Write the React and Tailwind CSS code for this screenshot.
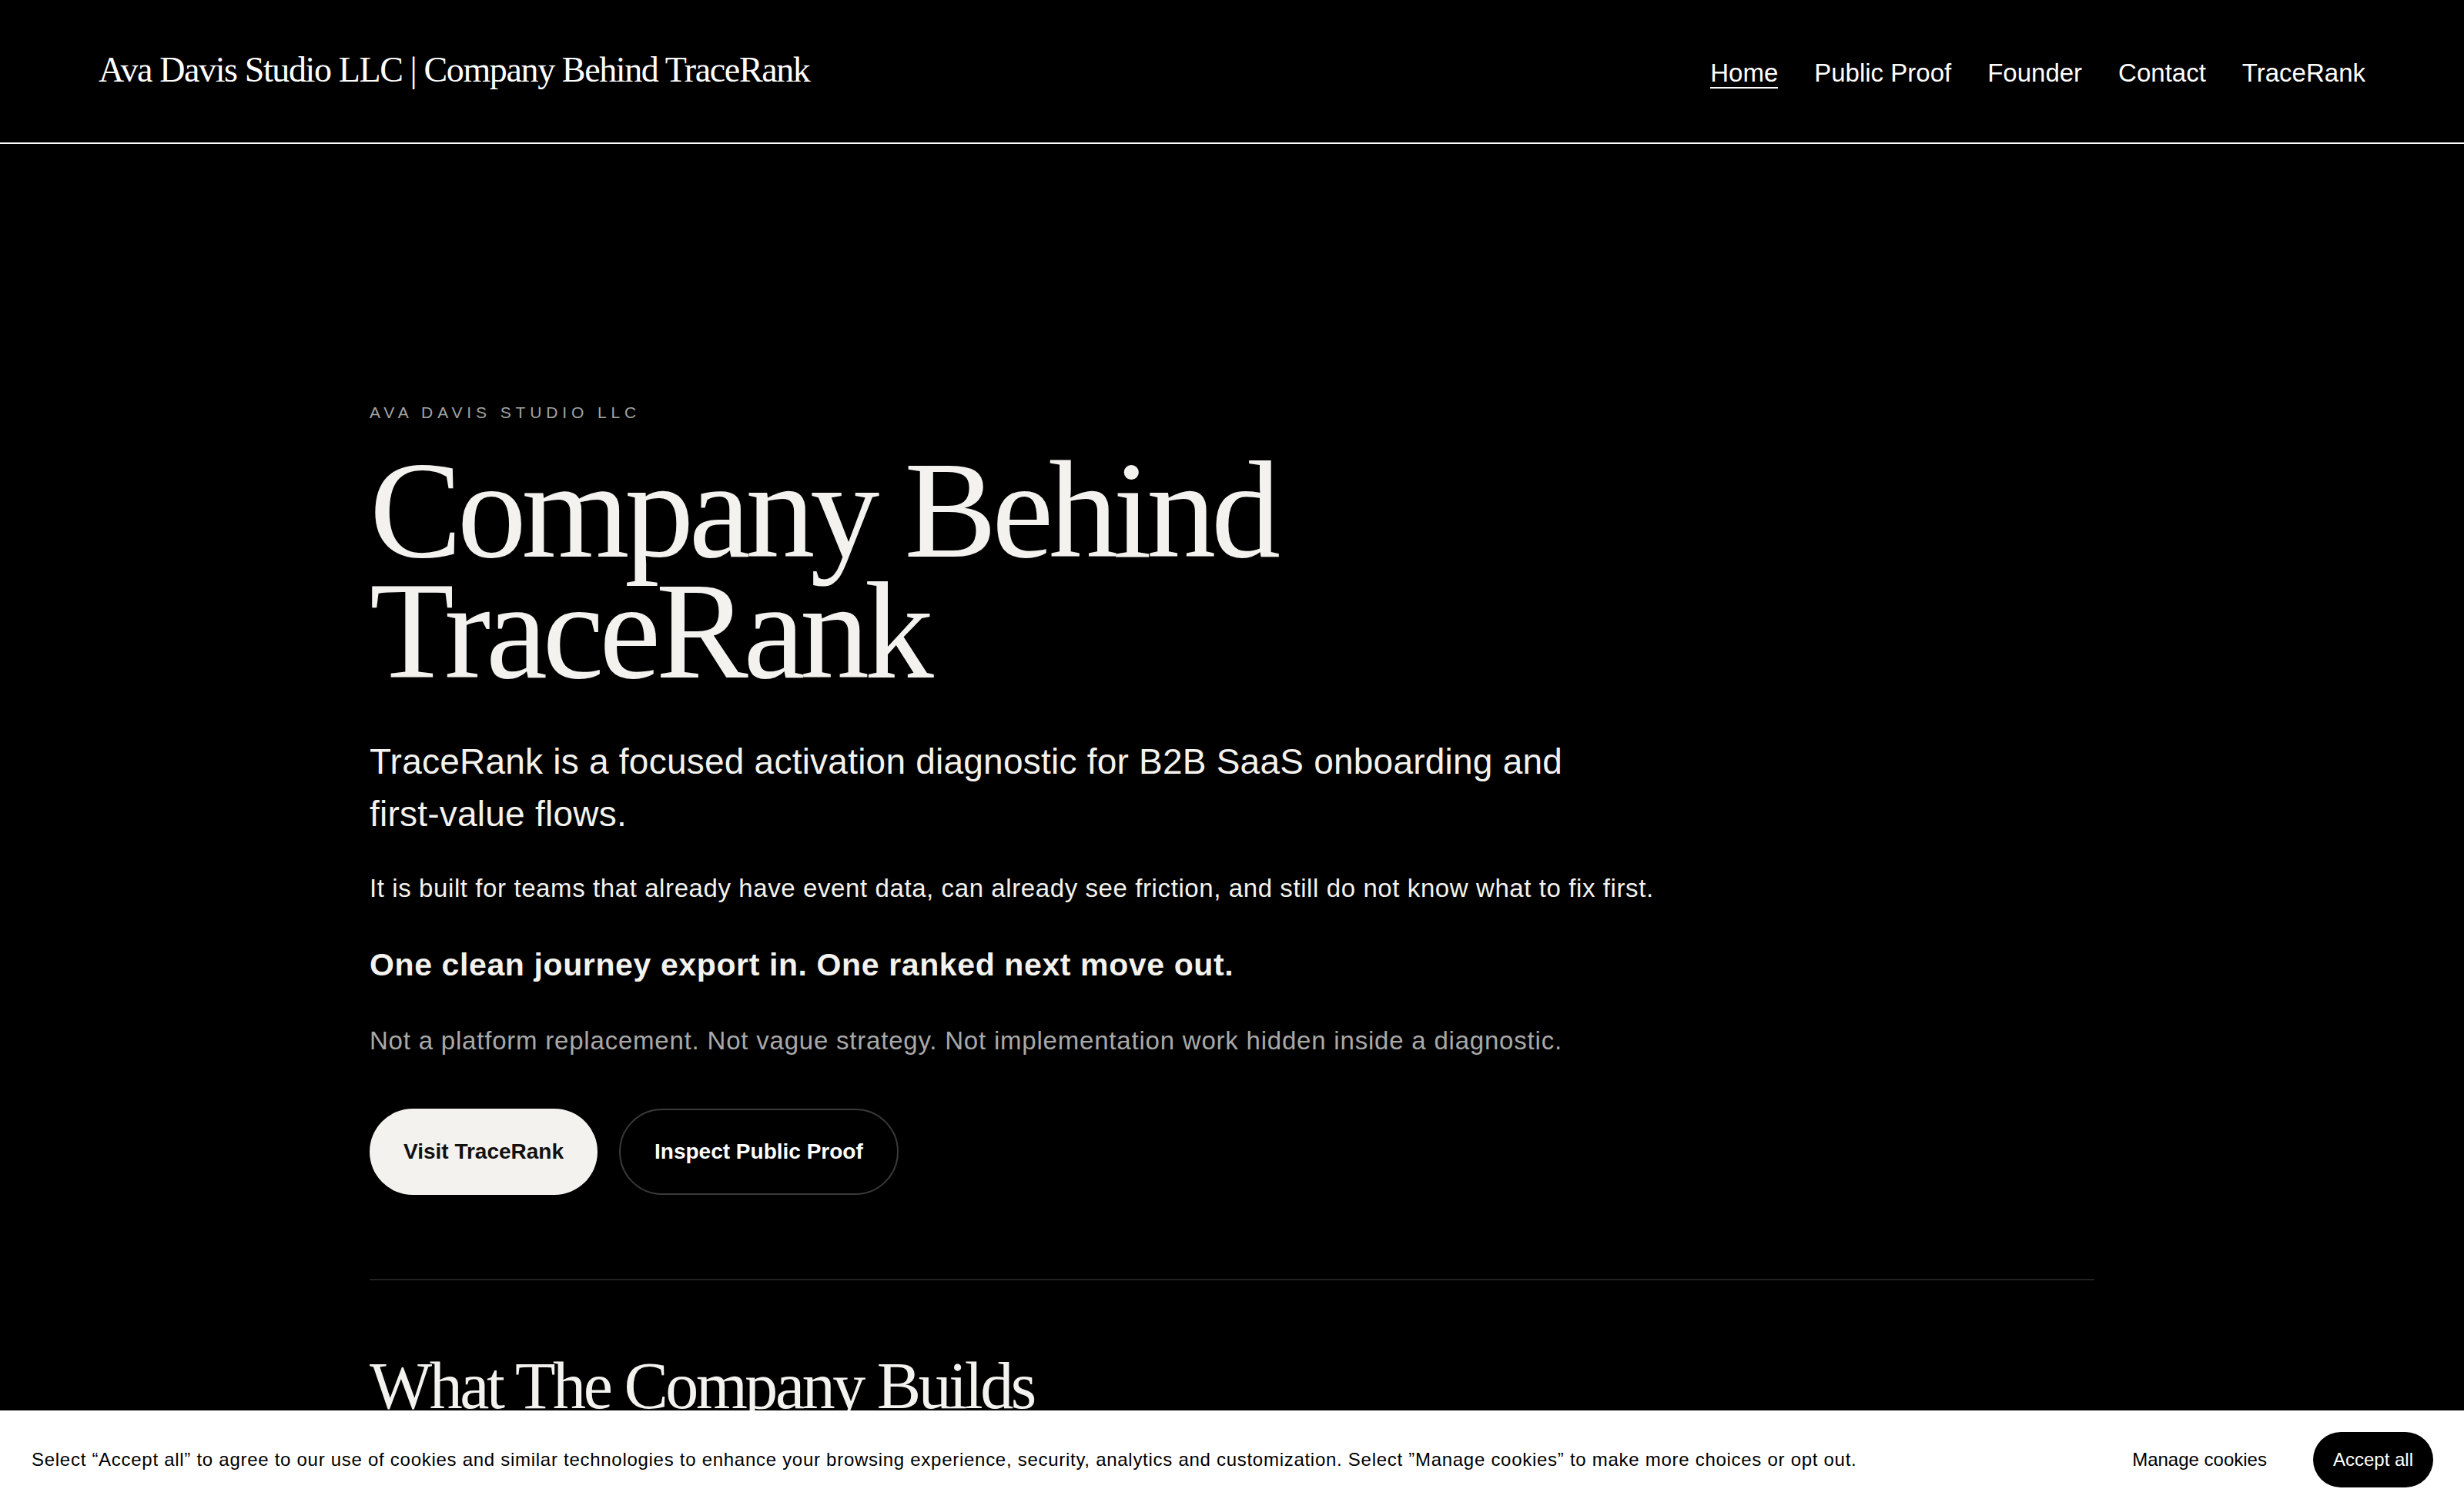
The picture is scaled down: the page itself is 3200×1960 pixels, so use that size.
import React from 'react';

const navLinks = ['Home', 'Public Proof', 'Founder', 'Contact', 'TraceRank'];

const Header = () => (
  <header className="h-[187px] px-[128px] pt-[68px] flex justify-between items-baseline border-b-2 border-white">
    <a className="font-['Liberation_Serif',serif] text-[46px] leading-none tracking-[-0.03em] text-white">
      Ava Davis Studio LLC | Company Behind TraceRank
    </a>
    <nav className="flex items-baseline gap-[47px] text-[33px] leading-none text-white">
      {navLinks.map((link, idx) => (
        <a
          key={link}
          className={idx === 0 ? 'inline-block pb-[2px] border-b-2 border-white' : 'inline-block pb-[2px] border-b-2 border-transparent'}
        >
          {link}
        </a>
      ))}
    </nav>
  </header>
);

const Hero = () => (
  <section className="max-w-[2240px] mx-auto pt-[338px]">
    <p className="text-[21px] leading-none tracking-[0.28em] text-[#a3a3a3]">AVA DAVIS STUDIO LLC</p>

    <h1 className="mt-[38px] max-w-[1400px] font-['Liberation_Serif',serif] text-[180px] leading-[157px] tracking-[-0.035em] text-[#f3f2ee]">
      Company Behind TraceRank
    </h1>

    <p className="mt-[57px] max-w-[1640px] text-[46px] leading-[68px] tracking-[0.005em] text-[#f3f2ee]">
      TraceRank is a focused activation diagnostic for B2B SaaS onboarding and first&#8209;value flows.
    </p>

    <p className="mt-[38px] text-[33px] leading-[50px] tracking-[0.018em] text-[#f3f2ee]">
      It is built for teams that already have event data, can already see friction, and still do not know what to fix first.
    </p>

    <p className="mt-[46px] text-[41px] leading-[56px] tracking-[0.015em] font-bold text-[#f3f2ee]">
      One clean journey export in. One ranked next move out.
    </p>

    <p className="mt-[46px] text-[33px] leading-[50px] tracking-[0.024em] text-[#a8a8a8]">
      Not a platform replacement. Not vague strategy. Not implementation work hidden inside a diagnostic.
    </p>

    {/* Calls to action */}
    <div className="mt-[63px] flex gap-[28px]">
      <a className="h-[112px] px-[44px] flex items-center rounded-full bg-[#f3f2ee] text-[#111] text-[28px] font-bold">
        Visit TraceRank
      </a>
      <a className="h-[112px] px-[44px] flex items-center rounded-full border-2 border-[#3a3a3a] text-white text-[28px] font-bold">
        Inspect Public Proof
      </a>
    </div>

    <div className="mt-[109px] h-[2px] bg-[#222]" />

    <h2 className="mt-[94px] font-['Liberation_Serif',serif] text-[86px] leading-none tracking-[-0.04em] text-[#f3f2ee]">
      What The Company Builds
    </h2>
  </section>
);

const CookieBanner = () => (
  <div className="fixed inset-x-0 bottom-0 h-[128px] bg-white flex items-center justify-between pl-[41px] pr-[40px] text-black text-[24px]">
    <p className="leading-none tracking-[0.03em]">
      Select “Accept all” to agree to our use of cookies and similar technologies to enhance your browsing experience, security, analytics and customization. Select ”Manage cookies” to make more choices or opt out.
    </p>
    <div className="flex items-center gap-[60px]">
      <button className="leading-none">Manage cookies</button>
      <button className="h-[72px] px-[26px] rounded-full bg-black text-white leading-none">Accept all</button>
    </div>
  </div>
);

const App = () => (
  <div className="h-screen overflow-hidden bg-black font-['Liberation_Sans',Arial,sans-serif]">
    <Header />
    <Hero />
    <CookieBanner />
  </div>
);

export default App;
